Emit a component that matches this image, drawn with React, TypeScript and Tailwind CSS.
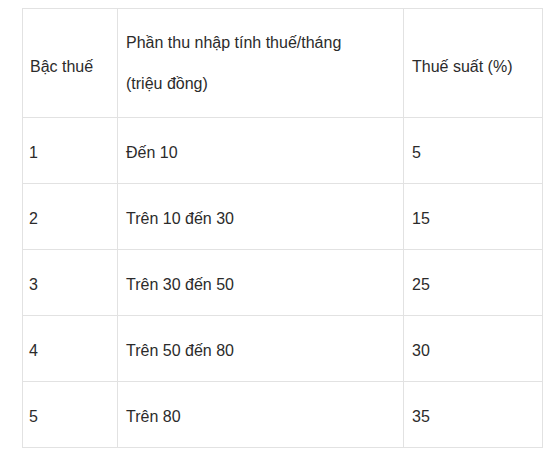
import { Fragment } from 'react';

const rows = [
  { bac: '1', thu: 'Đến 10', suat: '5' },
  { bac: '2', thu: 'Trên 10 đến 30', suat: '15' },
  { bac: '3', thu: 'Trên 30 đến 50', suat: '25' },
  { bac: '4', thu: 'Trên 50 đến 80', suat: '30' },
  { bac: '5', thu: 'Trên 80', suat: '35' },
];

const cell = 'border-r border-b border-[#e2e2e2] pl-2';

export default function App() {
  return (
    <div
      className="min-h-screen bg-white pt-[8px] pl-[22px] text-[16px] leading-[24px] text-[#2b2b2b]"
      style={{ fontFamily: '"Liberation Sans", Arial, sans-serif' }}
    >
      <div className="grid w-fit grid-cols-[95px_286px_139px] border-l border-t border-[#e2e2e2]">
        {/* Header */}
        <div className={`${cell} h-[109px] pt-[46px] pl-[7px]`}>Bậc thuế</div>
        <div className={`${cell} h-[109px] pt-[22px]`}>
          <p>Phần thu nhập tính thuế/tháng</p>
          <p className="mt-[17px]">(triệu đồng)</p>
        </div>
        <div className={`${cell} h-[109px] pt-[46px]`}>Thuế suất (%)</div>

        {rows.map((r) => (
          <Fragment key={r.bac}>
            <div className={`${cell} h-[66px] pt-[23px] pl-[6px]`}>{r.bac}</div>
            <div className={`${cell} h-[66px] pt-[23px]`}>{r.thu}</div>
            <div className={`${cell} h-[66px] pt-[23px]`}>{r.suat}</div>
          </Fragment>
        ))}
      </div>
    </div>
  );
}
